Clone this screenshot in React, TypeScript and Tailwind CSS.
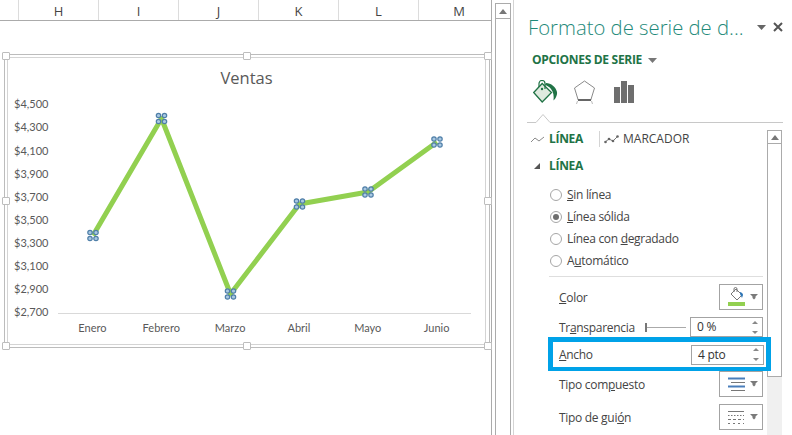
const columns = ['H', 'I', 'J', 'K', 'L', 'M'];
const yLabels = ['$4,500', '$4,300', '$4,100', '$3,900', '$3,700', '$3,500', '$3,300', '$3,100', '$2,900', '$2,700'];
const months = ['Enero', 'Febrero', 'Marzo', 'Abril', 'Mayo', 'Junio'];
const points = [
  [35, 135.5],
  [103.5, 18.5],
  [172.5, 194],
  [241.5, 104],
  [310, 92],
  [379, 42],
];

const Handle = ({ className }: { className: string }) => (
  <div className={`absolute w-[8px] h-[8px] bg-white border border-[#bdbdbd] rounded-[1px] ${className}`} />
);

const Marker = ({ x, y }: { x: number; y: number }) => (
  <g stroke="#4f7fa8" strokeWidth="1.2" fill="#a9c8e2">
    <circle cx={x - 3} cy={y - 3} r="2.2" />
    <circle cx={x + 3} cy={y - 3} r="2.2" />
    <circle cx={x - 3} cy={y + 3} r="2.2" />
    <circle cx={x + 3} cy={y + 3} r="2.2" />
  </g>
);

const Plot = () => (
  <svg width="413" height="214" className="block">
    <line x1="0" y1="213.5" x2="413" y2="213.5" stroke="#d9d9d9" />
    <polyline
      points={points.map((p) => p.join(',')).join(' ')}
      fill="none"
      stroke="#92d050"
      strokeWidth="5"
      strokeLinejoin="round"
    />
    {points.map((p) => (
      <Marker key={p[0]} x={p[0]} y={p[1]} />
    ))}
  </svg>
);

const Caret = () => (
  <svg width="8" height="6" viewBox="0 0 8 6">
    <path d="M0 0h8L5.500 2.500V4L4 5.500 2.500 4V2.500z" fill="#7a7a7a" />
  </svg>
);

const Spin = () => (
  <div className="flex flex-col gap-[7px] items-center w-[10px]">
    <svg width="6" height="3" viewBox="0 0 6 3">
      <path d="M3 0l3 3H0z" fill="#888" />
    </svg>
    <svg width="6" height="3" viewBox="0 0 6 3">
      <path d="M0 0h6L3 3z" fill="#888" />
    </svg>
  </div>
);

const Radio = ({ checked, children }: { checked?: boolean; children: React.ReactNode }) => (
  <div className="flex items-center h-[22px] ml-[36px]">
    <div className="w-[12px] h-[12px] rounded-full border border-[#a6a6a6] flex items-center justify-center">
      {checked && <div className="w-[6px] h-[6px] rounded-full bg-[#6e6e6e]" />}
    </div>
    <span className="ml-[5px]">{children}</span>
  </div>
);

const IconButton = ({ children }: { children: React.ReactNode }) => (
  <div className="w-[44px] h-[26px] border border-[#a3a3a3] flex items-center pl-[8px] gap-[5px] bg-white">
    {children}
    <Caret />
  </div>
);

const NumberBox = ({ value }: { value: string }) => (
  <div className="w-[73px] h-[20px] border border-[#a3a3a3] flex items-center justify-between pl-[6px] pr-[2px] bg-white text-[#333]">
    {value}
    <Spin />
  </div>
);

export default function App() {
  return (
    <div className="w-[792px] h-[435px] flex overflow-hidden bg-white font-['Open_Sans',sans-serif] text-[12px] tracking-[-0.3px] text-[#444]">
      {/* hoja */}
      <div className="w-[492px] h-full border-r border-[#ababab] shrink-0 tracking-normal">
        <div className="flex h-[21px] border-b border-[#ababab] text-[13px] text-[#444]">
          <div className="w-[19px] border-r border-[#dcdcdc]" />
          {columns.map((c) => (
            <div key={c} className="w-[80px] border-r border-[#dcdcdc] last:border-r-0 last:w-[72px] last:pl-[8px] pt-[3px] flex items-center justify-center">
              {c}
            </div>
          ))}
        </div>

        {/* grafico */}
        <div className="relative ml-[4px] mt-[33px] w-[486px] h-[294px] border border-[#bcbcbc] pl-[2px] pt-[2px]">
          <Handle className="-left-[3px] -top-[3px]" />
          <Handle className="left-[238px] -top-[3px]" />
          <Handle className="right-[-3px] -top-[3px]" />
          <Handle className="-left-[3px] top-[142px]" />
          <Handle className="right-[-3px] top-[142px]" />
          <Handle className="-left-[3px] -bottom-[3px]" />
          <Handle className="left-[238px] -bottom-[3px]" />
          <Handle className="right-[-3px] -bottom-[3px]" />
          <div className="w-[479px] h-[288px] border border-[#d4d4d4] font-['Lato',sans-serif] text-[#595959]">
            <div className="h-[32px] flex items-end justify-center text-[16.500px] leading-[24px] font-['Open_Sans',sans-serif]">Ventas</div>
            <div className="flex mt-[3px]">
              <div className="w-[50px] pl-[6px] text-[11px]">
                {yLabels.map((l) => (
                  <div key={l} className="h-[23.11px] flex items-center">
                    {l}
                  </div>
                ))}
              </div>
              <div className="mt-[7px]">
                <Plot />
                <div className="grid grid-cols-6 mt-[6px] text-[11px] leading-[16px] text-center">
                  {months.map((m) => (
                    <div key={m}>{m}</div>
                  ))}
                </div>
              </div>
            </div>
          </div>
        </div>
      </div>

      {/* barra de desplazamiento de la hoja */}
      <div className="ml-[3px] mt-[3px] w-[16px] border-x border-[#ababab] shrink-0">
        <div className="h-[16px] border-y border-[#ababab] flex items-center justify-center">
          <svg width="8" height="5" viewBox="0 0 8 5">
            <path d="M4 0l4 5H0z" fill="#777" />
          </svg>
        </div>
      </div>

      {/* panel */}
      <div className="ml-[2px] flex-1 h-full border-l border-[#d4d4d4] flex flex-col min-w-0">
        <div className="h-[123px] shrink-0">
          <div className="flex items-center h-[28px] mt-[13px] ml-[14px]">
            <span className="text-[20.300px] tracking-normal font-light text-[#1f8a7a] leading-[28px] w-[232px] whitespace-nowrap">Formato de serie de d...</span>
            <svg width="9" height="5" viewBox="0 0 9 5" className="ml-[-3px]">
              <path d="M0 0h9L4.500 5z" fill="#666" />
            </svg>
            <svg width="10" height="10" viewBox="0 0 10 10" className="ml-[7px]">
              <path d="M1 1l8 8M9 1l-8 8" stroke="#555" strokeWidth="2" />
            </svg>
          </div>
          <div className="flex items-center h-[18px] mt-[9px] ml-[18px] pt-[2px] font-bold text-[#217346] tracking-[-0.3px]">
            OPCIONES DE SERIE
            <svg width="9" height="5" viewBox="0 0 9 5" className="ml-[6px]">
              <path d="M0 0h9L4.500 5z" fill="#777" />
            </svg>
          </div>
          <div className="flex items-start mt-[12px] ml-[19px]">
            <svg width="25" height="25" viewBox="0 0 25 25">
              <path d="M9.200 3.500L18.500 12.500 9.200 22 .7 12.500z" fill="#dfeadf" stroke="#217346" strokeWidth="1.300" />
              <path d="M6 7V3.500a3 3 0 0 1 6 0V9" fill="none" stroke="#217346" strokeWidth="1.200" />
              <circle cx="9" cy="9" r="1.200" fill="#217346" />
              <path d="M13 3C18 3 23 7 24 12 24.500 15 22.500 19 20.500 20.500 21 16 20.500 12 18 9 16.500 7 14 5.500 12 5z" fill="#217346" />
            </svg>
            <svg width="22" height="24" viewBox="0 0 22 24" className="ml-[16px]">
              <path d="M10.500 1L20.500 8 16.800 20H4.200L.5 8z" fill="none" stroke="#8a8a8a" />
              <path d="M4 20h13" stroke="#666" strokeWidth="2" />
              <path d="M3.500 21l-1 3M17.500 21l1 3" stroke="#bbb" />
            </svg>
            <div className="flex items-end gap-[1px] h-[22px] ml-[18px] mt-[1px]">
              <div className="w-[6px] h-[16px] bg-[#6e6e6e]" />
              <div className="w-[6px] h-[22px] bg-[#6e6e6e]" />
              <div className="w-[6px] h-[18px] bg-[#6e6e6e]" />
            </div>
          </div>
        </div>

        <div className="flex flex-1 min-h-0 relative">
          {/* linea separadora con muesca */}
          <svg width="257" height="10" className="absolute left-[13px] top-[-10px]">
            <path d="M0 9.500H9L16 1.500 23 9.500H256" fill="none" stroke="#c8c8c8" />
          </svg>

          <div className="w-[253px] shrink-0">
            <div className="flex items-center h-[22px] mt-[5px] ml-[17px]">
              <svg width="14" height="7" viewBox="0 0 14 7">
                <path d="M0 6l4-4 4 3 5-4" fill="none" stroke="#8a8a8a" />
              </svg>
              <span className="ml-[4px] font-bold text-[#217346]">LÍNEA</span>
              <div className="ml-[16px] w-px h-[16px] bg-[#d4d4d4]" />
              <svg width="15" height="9" viewBox="0 0 15 9" className="ml-[4px]">
                <path d="M1 7l4-3 4 2 5-5" fill="none" stroke="#777" />
                <circle cx="1.500" cy="7" r="1.300" fill="#666" />
                <circle cx="5" cy="4" r="1.300" fill="#666" />
                <circle cx="9" cy="6" r="1.300" fill="#666" />
                <circle cx="13.500" cy="1.500" r="1.300" fill="#666" />
              </svg>
              <span className="ml-[4px] tracking-normal">MARCADOR</span>
            </div>

            <div className="flex items-center h-[20px] mt-[6px] ml-[20px]">
              <svg width="6" height="6" viewBox="0 0 6 6">
                <path d="M6 0v6H0z" fill="#555" />
              </svg>
              <span className="ml-[9px] font-bold text-[#217346]">LÍNEA</span>
            </div>

            <div className="mt-[8px]">
              <Radio><u>S</u>in línea</Radio>
              <Radio checked><u>L</u>ínea sólida</Radio>
              <Radio>Línea con <u>d</u>egradado</Radio>
              <Radio>A<u>u</u>tomático</Radio>
            </div>

            <div className="ml-[35px] w-[214px] h-px bg-[#dedede] mt-[4px]" />

            <div className="ml-[45px] w-[204px] h-[26px] mt-[7px] flex items-center justify-between">
              <span className="pt-[2px]"><u>C</u>olor</span>
              <IconButton>
                <svg width="17" height="21" viewBox="0 0 17 21">
                  <path d="M8 2l6 6-5 5-6-6z" fill="#fff" stroke="#777" />
                  <path d="M6 5V2a1.500 1.500 0 0 1 3 0v3" fill="none" stroke="#777" />
                  <path d="M12 5c2 .5 3 1.500 3 3l-1 3-2-4z" fill="#2f75b5" />
                  <rect x="0" y="15" width="17" height="4" fill="#92d050" />
                </svg>
              </IconButton>
            </div>

            <div className="ml-[45px] w-[204px] h-[20px] mt-[7px] flex items-center">
              <span className="pt-[2px]">Tr<u>a</u>nsparencia</span>
              <div className="ml-[10px] w-[2px] h-[9px] bg-[#777]" />
              <div className="w-[39px] h-px bg-[#aaa]" />
              <div className="ml-auto">
                <NumberBox value="0 %" />
              </div>
            </div>

            <div className="relative z-10 ml-[34px] w-[223px] h-[34px] border-[#00a2e8] border-x-[5px] border-t-[5px] border-b-[4px] bg-white flex items-center justify-between pl-[6px] pr-[2px]">
              <span><u>A</u>ncho</span>
              <NumberBox value="4 pto" />
            </div>

            <div className="ml-[45px] w-[204px] h-[26px] flex items-center justify-between">
              <span className="pt-[2px]">Tipo com<u>p</u>uesto</span>
              <IconButton>
                <svg width="17" height="16" viewBox="0 0 17 16">
                  <path d="M0 2.500h17" stroke="#4a7ebb" strokeWidth="2" />
                  <path d="M3 6.500h14" stroke="#777" />
                  <path d="M0 10.500h17" stroke="#4a7ebb" strokeWidth="2" />
                  <path d="M3 14.500h14" stroke="#777" />
                </svg>
              </IconButton>
            </div>

            <div className="ml-[45px] w-[204px] h-[26px] mt-[7px] flex items-center justify-between">
              <span className="pt-[2px]">Tipo de gui<u>ó</u>n</span>
              <IconButton>
                <svg width="17" height="14" viewBox="0 0 17 14">
                  <path d="M0 1.500h16" stroke="#777" />
                  <path d="M0 5.500h16" stroke="#777" strokeDasharray="1.500 1.500" />
                  <path d="M0 9.500h16" stroke="#777" strokeDasharray="3 2" />
                  <path d="M0 13.500h16" stroke="#777" strokeDasharray="2 3" />
                </svg>
              </IconButton>
            </div>
          </div>

          {/* barra del panel */}
          <div className="w-[15px] mt-[7px] bg-[#f0f0f0] shrink-0">
            <div className="h-[14px] bg-white border border-[#ababab] flex items-center justify-center">
              <svg width="8" height="5" viewBox="0 0 8 5">
                <path d="M4 0l4 5H0z" fill="#777" />
              </svg>
            </div>
            <div className="h-[233px] bg-white border-x border-b border-[#ababab]" />
          </div>
        </div>
      </div>
    </div>
  );
}
